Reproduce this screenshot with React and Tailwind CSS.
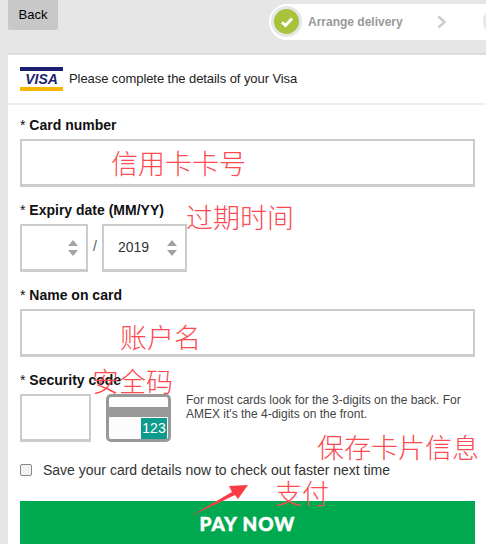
import React from "react";

const cjk = "font-['Noto_Sans_CJK_SC',sans-serif] font-light text-[#fb4a50] text-[27px] leading-none absolute whitespace-nowrap";

function Label({ children }) {
  return (
    <div className="text-[14px] leading-[16px] text-[#111]">
      * <span className="font-bold">{children}</span>
    </div>
  );
}

function Spinner() {
  return (
    <svg width="12" height="16" viewBox="0 0 12 16" className="absolute right-[7px] top-[14px]">
      <path d="M6 0 L11 6 H1 Z M1 10 H11 L6 16 Z" fill="#a3a3a3" />
    </svg>
  );
}

export default function App() {
  return (
    <div className="relative w-[486px] h-[544px] overflow-hidden bg-[#e6e6e6] font-['Liberation_Sans',Arial,sans-serif]">
      <div className="h-[53px] flex items-start pl-2">
        <div className="w-[50px] h-[30px] bg-[#c8c8c8] rounded-b-[2px] flex items-center justify-center text-[13px] text-black">
          Back
        </div>
        <div className="ml-[211px] mt-1 flex-1 h-9 bg-white rounded-l-[18px] flex items-center pl-[2px] overflow-hidden">
          <div className="shrink-0 w-[31px] h-[31px] -mt-[1px] rounded-full bg-[#a9c23c] border-[3px] border-[#e6e6e6] flex items-center justify-center">
            <svg width="14" height="12" viewBox="0 0 14 12">
              <path d="M2 6.2 L5.5 9.5 L12 2.5" fill="none" stroke="#fff" strokeWidth="2.8" />
            </svg>
          </div>
          <span className="shrink-0 ml-[6px] text-[12px] font-bold text-[#999] whitespace-nowrap">Arrange delivery</span>
          <svg width="10" height="14" viewBox="0 0 10 14" className="shrink-0 ml-[34px]">
            <path d="M1.5 1.5 L7.5 7 L1.5 12.5" fill="none" stroke="#ccc" strokeWidth="2.4" />
          </svg>
          <div className="shrink-0 ml-[36px] w-[31px] h-[31px] -mt-[1px] rounded-full border-[3px] border-[#e6e6e6]" />
        </div>
      </div>

      <div className="ml-2 bg-white border-t-2 border-[#dcdcdc] h-[491px]">
        <div className="h-[50px] border-b-2 border-[#eee] flex items-center pl-3">
          <div className="w-[43px] h-[24px] flex flex-col justify-between">
            <div className="h-[4px] bg-[#1a1f71]" />
            <div className="text-[14px] leading-[14px] font-bold italic text-[#1a1f71] text-center">VISA</div>
            <div className="h-[4px] bg-[#f7b600]" />
          </div>
          <span className="ml-[6px] text-[13px] tracking-[-0.07px] text-[#222]">
            Please complete the details of your Visa
          </span>
        </div>

        <div className="pl-3 pr-[11px] pt-[12px]">
          <Label>Card number</Label>
          <div className="mt-[6px] h-[48px] border-2 border-b-[3px] border-[#ccc]" />

          <div className="mt-[15px]"><Label>Expiry date (MM/YY)</Label></div>
          <div className="mt-[6px] flex items-start">
            <div className="relative w-[68px] h-[48px] border-2 border-b-[3px] border-[#ccc]">
              <Spinner />
            </div>
            <span className="w-[14px] mt-[14px] text-[14px] leading-[16px] text-[#555] text-center">/</span>
            <div className="relative w-[85px] h-[48px] border-2 border-b-[3px] border-[#ccc] pl-[14px] pt-[13px] text-[14px] leading-[16px] text-[#333]">
              2019
              <Spinner />
            </div>
          </div>

          <div className="mt-[15px]"><Label>Name on card</Label></div>
          <div className="mt-[6px] h-[48px] border-2 border-b-[3px] border-[#ccc]" />

          <div className="mt-[15px]"><Label>Security code</Label></div>
          <div className="mt-[6px] flex items-start">
            <div className="w-[71px] h-[48px] border-2 border-b-[3px] border-[#ccc]" />
            <div className="relative ml-[15px] w-[65px] h-[48px] border-[3px] border-[#999] rounded-[5px] bg-[#fcfcfc] overflow-hidden">
              <div className="mt-[10px] h-[10px] bg-[#999]" />
              <div className="absolute right-[1px] bottom-[0px] w-[26px] h-[21px] bg-[#0e9a8c] text-white text-[14px] leading-[21px] text-center">123</div>
            </div>
            <p className="ml-[15px] mt-[-1px] w-[289px] text-[12px] leading-[14px] text-[#444]">
              For most cards look for the 3-digits on the back. For AMEX it's the 4-digits on the front.
            </p>
          </div>

          <div className="mt-[20px] flex items-center h-[16px]">
            <div className="w-[12px] h-[12px] rounded-[2px] border border-[#888] bg-[#f2f2f2]" />
            <span className="ml-[11px] text-[14px] leading-[16px] text-[#333] whitespace-nowrap">Save your card details now to check out faster next time</span>
          </div>

          <div className="mt-[23px] h-[46px] bg-[#00a94f] flex items-center justify-center text-white text-[19px] font-['Lato',sans-serif] font-black tracking-[1px] [-webkit-text-stroke:0.5px_#fff]">
            PAY NOW
          </div>
        </div>
      </div>

      <span className={`${cjk} left-[111px] top-[149px]`}>信用卡卡号</span>
      <span className={`${cjk} left-[186px] top-[203px]`}>过期时间</span>
      <span className={`${cjk} left-[120px] top-[323px]`}>账户名</span>
      <span className={`${cjk} left-[92px] top-[367px]`}>安全码</span>
      <span className={`${cjk} left-[317px] top-[433px]`}>保存卡片信息</span>
      <span className={`${cjk} left-[275px] top-[479px]`}>支付</span>
      <svg width="70" height="50" viewBox="0 0 70 50" className="absolute left-[185px] top-[480px]">
        <path d="M4 37 L47 12 L44 6 L63 5 L53 19 L50 15 Z" fill="#fb3c44" />
      </svg>
    </div>
  );
}
